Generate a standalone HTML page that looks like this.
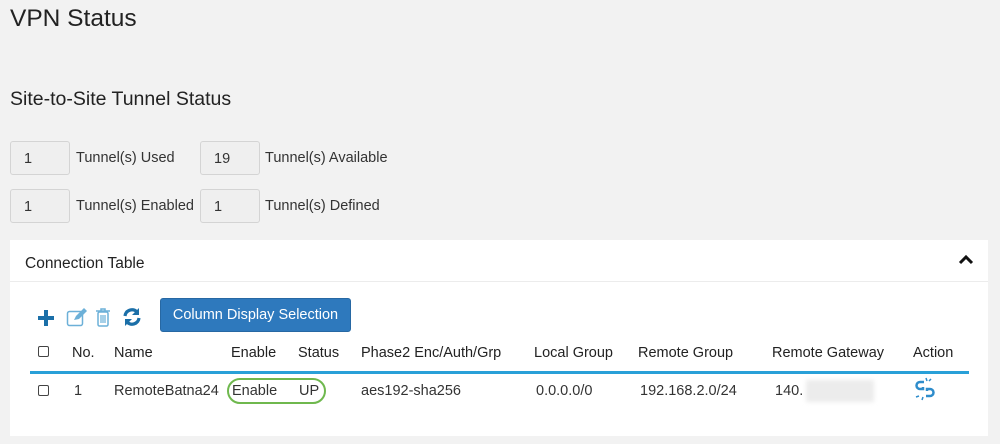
<!DOCTYPE html>
<html><head><meta charset="utf-8"><style>
*{margin:0;padding:0;box-sizing:border-box}
body{width:1000px;height:444px;background:#f2f2f2;font-family:"Liberation Sans",sans-serif;color:#222;position:relative;overflow:hidden}
.a{position:absolute;white-space:nowrap}
.box{position:absolute;width:60px;height:34px;border:1px solid #d4d4d4;border-radius:3px;background:#efefef;font-size:14.5px;padding:9px 0 0 13px;color:#333}
.lbl{position:absolute;font-size:14.5px;color:#333}
.panel{position:absolute;left:10px;top:240px;width:978px;height:196px;background:#fff}
.th{position:absolute;top:345px;font-size:14.5px;color:#222}
.td{position:absolute;top:383px;font-size:14.5px;color:#333}
.cb{position:absolute;width:11px;height:11px;border:1.5px solid #444;border-radius:2px}
</style></head><body>
<div class="a" style="left:10px;top:5px;font-size:24.5px;color:#222">VPN Status</div>
<div class="a" style="left:10px;top:88px;font-size:19.5px;color:#222">Site-to-Site Tunnel Status</div>
<div class="box" style="left:10px;top:141px">1</div><div class="lbl" style="left:76px;top:150px">Tunnel(s) Used</div>
<div class="box" style="left:200px;top:141px">19</div><div class="lbl" style="left:265px;top:150px">Tunnel(s) Available</div>
<div class="box" style="left:10px;top:189px">1</div><div class="lbl" style="left:76px;top:198px">Tunnel(s) Enabled</div>
<div class="box" style="left:200px;top:189px">1</div><div class="lbl" style="left:265px;top:198px">Tunnel(s) Defined</div>
<div class="panel"></div>
<div class="a" style="left:10px;top:281px;width:978px;height:1px;background:#ececec"></div>
<div class="a" style="left:25px;top:255px;font-size:15.5px;color:#222">Connection Table</div>
<svg class="a" style="left:958px;top:254px" width="16" height="12" viewBox="0 0 16 12"><path d="M2 9 L8 3 L14 9" stroke="#111" stroke-width="3" fill="none"/></svg>
<svg class="a" style="left:37px;top:309px" width="18" height="18"><path d="M9 1v16M1 9h16" stroke="#1b6fa8" stroke-width="4"/></svg>
<svg class="a" style="left:66px;top:307px" width="22" height="20" viewBox="0 0 22 20"><rect x="1.5" y="4.5" width="15" height="14" rx="2" fill="none" stroke="#6cb0d8" stroke-width="1.5"/><path d="M8 13l2-4 8-8 3 3-8 8z" fill="#6cb0d8"/></svg>
<svg class="a" style="left:95px;top:307px" width="16" height="20" viewBox="0 0 16 20"><path d="M1 4h14M6 4V2h4v2" stroke="#6cb0d8" stroke-width="1.5" fill="none"/><rect x="3" y="5" width="10" height="14" rx="1.5" fill="none" stroke="#6cb0d8" stroke-width="1.5"/><path d="M6 8v8M8 8v8M10 8v8" stroke="#6cb0d8" stroke-width="1.2"/></svg>
<svg class="a" style="left:122px;top:307px" width="20" height="20" viewBox="0 0 20 20"><path d="M3 9a7 7 0 0 1 12-4" stroke="#1b6fa8" stroke-width="3.2" fill="none"/><path d="M17 1v7h-7z" fill="#1b6fa8"/><path d="M17 11a7 7 0 0 1-12 4" stroke="#1b6fa8" stroke-width="3.2" fill="none"/><path d="M3 19v-7h7z" fill="#1b6fa8"/></svg>
<div class="a" style="left:160px;top:298px;width:191px;height:34px;background:#2e79bd;border:1px solid #2768a3;border-radius:3px;color:#fff;font-size:14.5px;text-align:center;line-height:32px">Column Display Selection</div>
<div class="cb" style="left:38px;top:346px"></div>
<div class="th" style="left:72px">No.</div>
<div class="th" style="left:114px">Name</div>
<div class="th" style="left:231px">Enable</div>
<div class="th" style="left:298px">Status</div>
<div class="th" style="left:361px">Phase2 Enc/Auth/Grp</div>
<div class="th" style="left:534px">Local Group</div>
<div class="th" style="left:638px">Remote Group</div>
<div class="th" style="left:772px">Remote Gateway</div>
<div class="th" style="left:913px">Action</div>
<div class="a" style="left:30px;top:371px;width:939px;height:3px;background:#29a0d8"></div>
<div class="cb" style="left:38px;top:385px"></div>
<div class="td" style="left:74px">1</div>
<div class="td" style="left:114px">RemoteBatna24</div>
<div class="td" style="left:232px">Enable</div>
<div class="td" style="left:299px">UP</div>
<div class="a" style="left:227px;top:378px;width:99px;height:26px;border:2.5px solid #6fb84e;border-radius:13px"></div>
<div class="td" style="left:361px">aes192-sha256</div>
<div class="td" style="left:536px">0.0.0.0/0</div>
<div class="td" style="left:640px">192.168.2.0/24</div>
<div class="td" style="left:775px">140.</div>
<div class="a" style="left:806px;top:380px;width:68px;height:22px;background:#ececec;filter:blur(2px)"></div>
<svg class="a" style="left:913px;top:377px" width="24" height="24" viewBox="0 0 24 24"><path d="M11 5H7a3.5 3.5 0 0 0 0 7h3v-2" stroke="#2e8ccb" stroke-width="2.5" fill="none"/><path d="M13 19h4a3.5 3.5 0 0 0 0-7h-3v2" stroke="#2e8ccb" stroke-width="2.5" fill="none"/><path d="M13 1l1 3M18 2l-2 2M3 20l3-1M9 23l1-3" stroke="#2e8ccb" stroke-width="1.5"/></svg>
</body></html>
